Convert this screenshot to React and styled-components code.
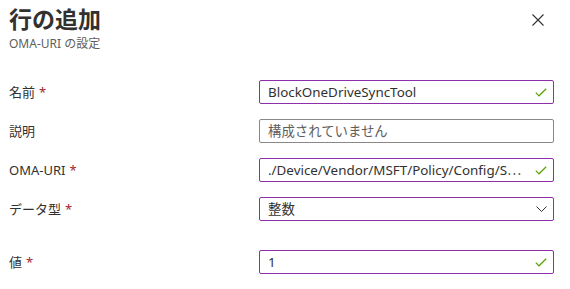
import React from 'react'
import styled, { createGlobalStyle } from 'styled-components'

const GlobalStyle = createGlobalStyle`
  html, body {
    margin: 0;
    padding: 0;
    background: #fff;
  }
  body {
    font-family: "Segoe UI", "Noto Sans", "Noto Sans CJK JP", sans-serif;
    color: #323130;
  }
`

const Panel = styled.div`
  width: 570px;
  height: 289px;
  box-sizing: border-box;
  overflow: hidden;
`

const Header = styled.div`
  display: flex;
  justify-content: space-between;
  align-items: flex-start;
  padding: 4px 20px 0 9px;
`

const Title = styled.h1`
  margin: 0;
  font-size: 23px;
  line-height: 30px;
  font-weight: 600;
  color: #323130;
`

const Subtitle = styled.div`
  margin-top: 2px;
  font-size: 12px;
  line-height: 16px;
  color: #605e5c;
`

const CloseButton = styled.button`
  margin-top: 4px;
  width: 24px;
  height: 24px;
  padding: 0;
  border: none;
  background: transparent;
  display: flex;
  align-items: center;
  justify-content: center;
  cursor: pointer;
`

const Form = styled.div`
  display: flex;
  flex-direction: column;
  gap: 15px;
  padding: 28px 0 0 9px;
`

const Row = styled.div`
  display: grid;
  grid-template-columns: 250px 295px;
  align-items: center;
  margin-top: ${p => (p.$extra ? '14px' : '0')};
`

const Label = styled.label`
  font-size: 13px;
  line-height: 18px;
  color: #323130;
`

const Required = styled.span`
  color: #a4262c;
  margin-left: 4px;
`

const Field = styled.div`
  height: 24px;
  box-sizing: border-box;
  border: 1px solid ${p => (p.$dirty ? '#8c2fa8' : '#8a8886')};
  border-radius: 2px;
  display: flex;
  align-items: center;
  padding: 0 5px 0 8px;
  gap: 6px;
`

const Value = styled.span`
  flex: 1;
  min-width: 0;
  font-size: 13.4px;
  line-height: 18px;
  white-space: nowrap;
  overflow: hidden;
  color: ${p => (p.$placeholder ? '#605e5c' : '#323130')};
`

const IconSlot = styled.span`
  width: 14px;
  display: flex;
  justify-content: center;
  flex-shrink: 0;
`

const Check = () => (
  <svg width="12" height="9" viewBox="0 0 12 9">
    <path d="M0.8 4.6 L4 7.8 L11.2 0.8" fill="none" stroke="#57a300" strokeWidth="1.2" />
  </svg>
)

const Chevron = () => (
  <svg width="11" height="6" viewBox="0 0 11 6">
    <path d="M0.5 0.5 L5.5 5.5 L10.5 0.5" fill="none" stroke="#323130" strokeWidth="1" />
  </svg>
)

const CloseIcon = () => (
  <svg width="12" height="12" viewBox="0 0 12 12">
    <path d="M0.5 0.5 L11.5 11.5 M11.5 0.5 L0.5 11.5" stroke="#323130" strokeWidth="1.1" />
  </svg>
)

const fields = [
  { label: '名前', required: true, value: 'BlockOneDriveSyncTool', icon: 'check' },
  { label: '説明', value: '構成されていません', placeholder: true },
  {
    label: 'OMA-URI',
    required: true,
    value: './Device/Vendor/MSFT/Policy/Config/S⋯',
    icon: 'check',
  },
  { label: 'データ型', required: true, value: '整数', icon: 'chevron' },
  { label: '値', required: true, value: '1', icon: 'check', extra: true },
]

const App = () => {
  return (
    <Panel>
      <GlobalStyle />
      <Header>
        <div>
          <Title>行の追加</Title>
          <Subtitle>OMA-URI の設定</Subtitle>
        </div>
        <CloseButton aria-label="閉じる">
          <CloseIcon />
        </CloseButton>
      </Header>
      <Form>
        {fields.map((f, i) => (
          <Row key={i} $extra={f.extra}>
            <Label>
              {f.label}
              {f.required && <Required>*</Required>}
            </Label>
            <Field $dirty={!f.placeholder}>
              <Value $placeholder={f.placeholder}>{f.value}</Value>
              {f.icon && (
                <IconSlot>{f.icon === 'check' ? <Check /> : <Chevron />}</IconSlot>
              )}
            </Field>
          </Row>
        ))}
      </Form>
    </Panel>
  )
}

export default App
